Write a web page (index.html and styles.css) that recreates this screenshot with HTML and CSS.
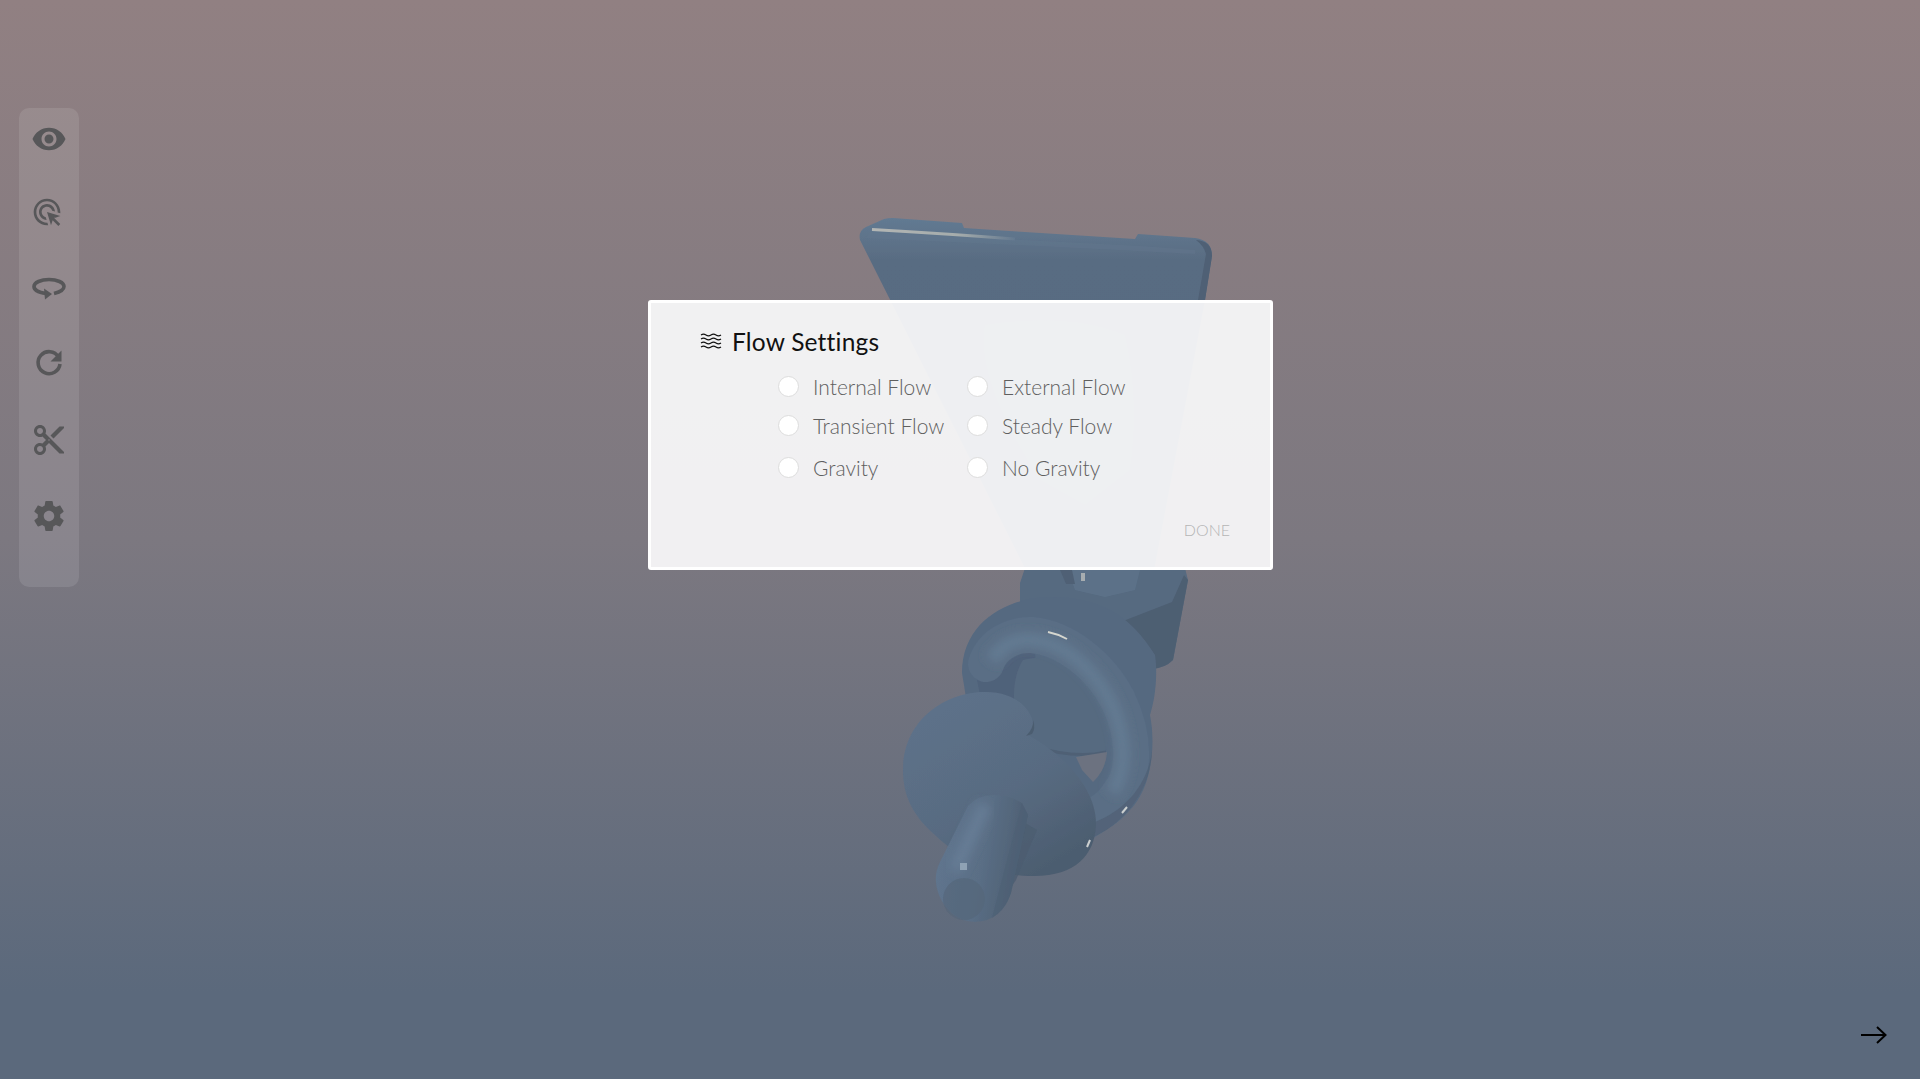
FILE: index.html
```html
<!DOCTYPE html>
<html lang="en">
  <head>
    <meta charset="UTF-8" />
    <title>Flow Settings</title>
    <link rel="stylesheet" href="styles.css">
  </head>
  <body>
    <!-- 3D model on the canvas -->
    <svg class="model" viewBox="0 0 1920 1079">
      <defs>
        <linearGradient id="plateFill" x1="0" y1="0" x2="0" y2="1">
          <stop offset="0" stop-color="#627a92" />
          <stop offset="0.12" stop-color="#596c82" />
          <stop offset="1" stop-color="#566a80" />
        </linearGradient>
        <linearGradient id="glint" x1="0" y1="0" x2="1" y2="0">
          <stop offset="0" stop-color="#b3b6b4" />
          <stop offset="0.6" stop-color="#a5acac" />
          <stop offset="1" stop-color="#64798f" />
        </linearGradient>
        <linearGradient id="discFill" x1="0.2" y1="0.1" x2="0.75" y2="0.95">
          <stop offset="0" stop-color="#5d7189" />
          <stop offset="0.55" stop-color="#586b81" />
          <stop offset="1" stop-color="#4c5d70" />
        </linearGradient>
        <linearGradient id="stemFill" x1="0" y1="0" x2="1" y2="0.25">
          <stop offset="0" stop-color="#607690" />
          <stop offset="0.6" stop-color="#5a6e85" />
          <stop offset="1" stop-color="#4d5f72" />
        </linearGradient>
        <filter id="soft"><feGaussianBlur stdDeviation="0.7" /></filter>
        <filter id="softer" x="-30%" y="-30%" width="160%" height="160%"><feGaussianBlur stdDeviation="5" /></filter>
      </defs>
      <g filter="url(#soft)">
        <!-- top plate -->
        <path fill="url(#plateFill)" d="M860 240 Q858 231 866 227 L884 219 Q888 218 893 218 L962 223 L964 228 L1135 239 L1138 234 L1195 238 Q1212 240 1212 256 L1205 300 L1154 570 L1026 570 Z" />
        <path fill="#4f6074" d="M1196 240 Q1212 241 1212 256 L1205 300 L1198 300 L1206 254 Q1204 246 1196 240 Z" />
        <path fill="#63788f" d="M870 232 L1140 246 L1195 250 L1195 254 L1040 246 L866 238 Z" opacity="0.4" />
        <path fill="#64798f" d="M985 325 Q1070 312 1125 335 Q1140 400 1130 470 L1085 505 L1040 480 Q975 380 985 325 Z" opacity="0.3" filter="url(#soft)" />
        <path fill="none" stroke="url(#glint)" stroke-width="3" d="M872 229.500 Q950 234 1015 239" />
        <!-- clamp body -->
        <path fill="#566a80" d="M1020 583 L1025 568 L1185 568 L1188 580 L1173 660 Q1165 668 1152 669 L1120 680 L1020 620 Z" />
        <path fill="#4e5f72" d="M1118 623 L1172 602 L1184 575 L1188 580 L1173 660 Q1165 668 1152 669 L1125 660 Z" />
        <path fill="#61768e" d="M1068 570 L1140 570 L1135 590 L1105 597 L1075 590 Z" opacity="0.6" />
        <path fill="#4f6175" d="M1060 570 L1072 570 L1075 584 L1066 584 Z" />
        <rect x="1081" y="573" width="4" height="8" fill="#a7adb0" />
        <!-- back of the ring -->
        <path fill="#556980" d="M962 673 C962 620 1010 597 1050 597 C1100 597 1130 615 1155 655 C1158 675 1155 700 1150 715 C1156 745 1152 790 1128 812 C1105 835 1085 840 1060 842 L1000 790 L968 710 Z" />
        <!-- inner disc and see-through gap -->
        <path fill="#50627a" d="M975 670 C990 650 1015 645 1035 650 L1040 745 L985 720 Z" />
        <path fill="#566a80" d="M1023 660 C1060 650 1095 670 1112 705 C1110 730 1108 745 1105 752 C1085 757 1060 755 1030 745 C1010 720 1010 680 1023 660 Z" />
        <path fill="none" stroke="#4f6175" stroke-width="3" d="M1030 745 C1060 755 1085 757 1106 752" />
        <path fill="#6c7280" d="M1076 757 L1107 752 Q1106 770 1093 782 L1082 770 Z" />
        <!-- front tube of the ring -->
        <path fill="none" stroke="#5a6e85" stroke-width="36" stroke-linecap="round" d="M986 664 C992 645 1012 634 1032 635 C1065 638 1100 665 1118 700 C1135 735 1136 775 1118 795 C1110 808 1100 812 1085 822" />
        <path fill="none" stroke="#647a92" stroke-width="14" filter="url(#softer)" d="M992 660 C1002 645 1015 638 1032 640 C1065 643 1095 670 1112 705 C1125 735 1128 770 1112 792" />
        <path fill="#4f6074" d="M1086 840 C1115 830 1150 800 1152 750 C1148 785 1125 810 1095 822 Z" opacity="0.7" />
        <!-- big disc -->
        <path fill="url(#discFill)" d="M903 770 C903 720 945 692 985 692 C1015 692 1030 708 1033 722 C1034 728 1031 732 1028 735 C1065 755 1097 790 1096 825 C1095 855 1075 876 1035 876 C1000 877 960 860 935 835 C912 815 903 795 903 770 Z" />
        <path fill="#4c5d70" d="M1026 736 Q1034 728 1033 720 Q1036 728 1032 734 Z" />
        <!-- stem -->
        <path fill="#4c5d70" d="M1020 820 L1037 830 L1016 880 L1003 900 Z" opacity="0.8" />
        <path fill="url(#stemFill)" d="M968 806 Q978 795 993 795 Q1010 795 1022 803 L1028 815 L1011 893 Q1002 921 975 922 Q950 921 939 895 Q932 878 940 862 Z" />
        <path fill="none" stroke="#667c94" stroke-width="14" filter="url(#softer)" d="M985 805 L955 870" />
        <path fill="#4f6074" d="M1022 803 L1028 815 L1011 893 Q1005 910 992 918 Q1002 880 1022 803 Z" opacity="0.6" />
        <circle cx="964" cy="899" r="21" fill="#546679" opacity="0.6" filter="url(#soft)" />
        <!-- glints -->
        <rect x="960" y="863" width="7" height="7" fill="#8fa2b4" />
        <path fill="none" stroke="#d5d6cf" stroke-width="2" d="M1048 632 Q1058 634 1067 639" />
        <path fill="none" stroke="#ccd0d0" stroke-width="2" d="M1122 813 L1127 807" />
        <path fill="none" stroke="#ccd0d0" stroke-width="2" d="M1087 847 L1090 840" />
      </g>
    </svg>

    <div class="stage">
      <nav class="toolbar">
        <div class="tool tool-eye">
          <svg viewBox="0 0 24 24"><path d="M12 4.500C7 4.500 2.730 7.610 1 12c1.730 4.390 6 7.500 11 7.500s9.270-3.110 11-7.500c-1.730-4.390-6-7.500-11-7.500zM12 17c-2.760 0-5-2.240-5-5s2.240-5 5-5 5 2.240 5 5-2.240 5-5 5zm0-8c-1.660 0-3 1.340-3 3s1.340 3 3 3 3-1.340 3-3-1.340-3-3-3z" /></svg>
        </div>
        <div class="tool tool-select">
          <svg viewBox="0 0 24 24"><path d="M11.710 17.990C8.530 17.840 6 15.220 6 12c0-3.310 2.690-6 6-6 3.220 0 5.840 2.530 5.990 5.710l-2.100-.63C15.480 9.310 13.890 8 12 8c-2.210 0-4 1.790-4 4 0 1.890 1.310 3.480 3.080 3.890l.63 2.100zM22 12c0 .3-.01.6-.04.9l-1.970-.59C20 12.210 20 12.100 20 12c0-4.420-3.580-8-8-8s-8 3.580-8 8 3.580 8 8 8c.1 0 .21 0 .31-.01l.59 1.970c-.3.03-.6.04-.9.04C6.480 22 2 17.520 2 12S6.480 2 12 2s10 4.480 10 10zm-3.770 4.260L22 15l-10-3 3 10 1.260-3.770 4.270 4.270 1.410-1.410-4.710-4.830z" /></svg>
        </div>
        <div class="tool">
          <svg viewBox="0 0 36 36">
            <path class="line" d="M15 23.500 C7 22.500 3 19.500 3 16.500 C3 12.500 10 9.500 18 9.500 C26 9.500 33 12.500 33 16.500 C33 19.500 29 22 23 23.500" />
            <path d="M13 18.500 L21 24 L14 29.500 Z" />
          </svg>
        </div>
        <div class="tool">
          <svg viewBox="0 0 36 36">
            <path class="line" d="M27.500 12 A11 11 0 1 0 29 19" />
            <path d="M30.500 5.500 L30.500 16.500 L19.500 16.500 Z" />
          </svg>
        </div>
        <div class="tool tool-low">
          <svg viewBox="0 0 24 24"><path d="M9.640 7.640c.23-.5.36-1.050.36-1.640 0-2.210-1.790-4-4-4S2 3.790 2 6s1.790 4 4 4c.59 0 1.140-.13 1.640-.36L10 12l-2.360 2.360C7.140 14.130 6.590 14 6 14c-2.210 0-4 1.790-4 4s1.790 4 4 4 4-1.790 4-4c0-.59-.13-1.140-.36-1.640L12 14l7 7h3v-1L9.640 7.640zM6 8c-1.100 0-2-.89-2-2s.9-2 2-2 2 .89 2 2-.9 2-2 2zm0 12c-1.100 0-2-.89-2-2s.9-2 2-2 2 .89 2 2-.9 2-2 2zm6-7.500c-.28 0-.5-.22-.5-.5s.22-.5.5-.5.5.22.5.5-.22.5-.5.5zM19 3l-6 6 2 2 7-7V3z" /></svg>
        </div>
        <div class="tool tool-gear">
          <svg viewBox="0 0 24 24"><path d="M19.430 12.980c.04-.32.07-.64.07-.98s-.03-.66-.07-.98l2.110-1.650c.19-.15.24-.42.12-.64l-2-3.460c-.12-.22-.39-.3-.61-.22l-2.490 1c-.52-.4-1.080-.73-1.690-.98l-.38-2.650C14.460 2.180 14.250 2 14 2h-4c-.25 0-.46.18-.49.42l-.38 2.650c-.61.25-1.170.59-1.690.98l-2.490-1c-.23-.09-.49 0-.61.22l-2 3.460c-.13.22-.07.49.12.64l2.110 1.650c-.04.32-.07.65-.07.98s.03.66.07.98l-2.110 1.650c-.19.15-.24.42-.12.64l2 3.460c.12.22.39.3.61.22l2.490-1c.52.4 1.080.73 1.690.98l.38 2.650c.03.24.24.42.49.42h4c.25 0 .46-.18.49-.42l.38-2.650c.61-.25 1.170-.59 1.690-.98l2.490 1c.23.09.49 0 .61-.22l2-3.460c.12-.22.07-.49-.12-.64l-2.110-1.650zM12 15.500c-1.930 0-3.500-1.570-3.500-3.500s1.570-3.500 3.500-3.500 3.500 1.570 3.500 3.500-1.570 3.500-3.500 3.500z" /></svg>
        </div>
      </nav>

      <svg class="next-arrow" viewBox="0 0 26 18">
        <path d="M0 9 H24 M16 1 L24.500 9 L16 17" />
      </svg>
    </div>

    <section class="dialog">
      <h2 class="dialog-title">
        <svg class="waves" viewBox="0 0 22 16">
          <path d="M1 2 q2.500 -1.600 5 0 t5 0 t5 0 t5 0" />
          <path d="M1 6 q2.500 -1.600 5 0 t5 0 t5 0 t5 0" />
          <path d="M1 10 q2.500 -1.600 5 0 t5 0 t5 0 t5 0" />
          <path d="M1 14 q2.500 -1.600 5 0 t5 0 t5 0 t5 0" />
        </svg>
        Flow Settings
      </h2>

      <div class="options">
        <label class="option"><span class="radio"></span>Internal Flow</label>
        <label class="option"><span class="radio"></span>External Flow</label>
        <label class="option"><span class="radio"></span>Transient Flow</label>
        <label class="option"><span class="radio"></span>Steady Flow</label>
        <label class="option"><span class="radio"></span>Gravity</label>
        <label class="option"><span class="radio"></span>No Gravity</label>
      </div>

      <div class="actions">
        <button class="done">DONE</button>
      </div>
    </section>
  </body>
</html>
```

FILE: styles.css
```css
html,
body {
  margin: 0;
  height: 1079px;
  overflow: hidden;
}
body {
  position: relative;
  font-family: Lato, "Open Sans", sans-serif;
  background: linear-gradient(180deg, #918082 0%, #7c7880 50%, #5b697c 92%, #5b697c 100%);
}
.model {
  position: absolute;
  top: 0;
  left: 0;
  width: 1920px;
  height: 1079px;
}
.stage {
  position: relative;
  box-sizing: border-box;
  height: 100%;
  display: flex;
  justify-content: space-between;
  padding: 108px 33px 35px 19px;
}
.toolbar {
  box-sizing: border-box;
  width: 60px;
  height: 479px;
  padding-top: 12px;
  display: flex;
  flex-direction: column;
  align-items: center;
  gap: 39px;
  background: rgba(255, 255, 255, 0.1);
  border-radius: 10px;
}
.tool {
  width: 36px;
  height: 36px;
}
.tool svg {
  display: block;
  width: 36px;
  height: 36px;
  fill: #575759;
}
.tool .line {
  fill: none;
  stroke: #575759;
  stroke-width: 3.6;
}
.tool-eye svg {
  margin-top: 1px;
}
.tool-select svg {
  width: 32px;
  height: 32px;
  margin: 1px 0 0 0;
}
.tool-low {
  padding-top: 2px;
}
.tool-gear {
  padding-top: 1px;
}
.next-arrow {
  align-self: flex-end;
  width: 26px;
  height: 18px;
  fill: none;
  stroke: #000;
  stroke-width: 2;
}
.dialog {
  position: absolute;
  top: 300px;
  left: 648px;
  box-sizing: border-box;
  width: 625px;
  height: 270px;
  border: 3px solid #fff;
  border-radius: 3px;
  background: rgba(251, 251, 252, 0.92);
  padding: 23px 40px 0 49px;
}
.dialog-title {
  display: flex;
  align-items: center;
  gap: 10px;
  margin: 0;
  height: 30px;
  font-size: 24.500px;
  font-weight: 400;
  letter-spacing: 0.2px;
  color: #111;
}
.waves {
  width: 22px;
  height: 16px;
  fill: none;
  stroke: #111;
  stroke-width: 1.2;
}
.options {
  display: grid;
  grid-template-columns: 189px 190px;
  grid-template-rows: 39px 42px 30px;
  margin: 20px 0 0 78px;
}
.option {
  display: flex;
  align-items: flex-start;
  gap: 14px;
  font-size: 21px;
  font-weight: 300;
  line-height: 22px;
  color: #5f5f5f;
}
.radio {
  box-sizing: border-box;
  flex: none;
  width: 21px;
  height: 21px;
  border: 1px solid #ddd;
  border-radius: 50%;
  background: #fff;
}
.actions {
  display: flex;
  justify-content: flex-end;
  margin-top: 33px;
}
.done {
  padding: 0;
  border: none;
  background: none;
  font-family: inherit;
  font-size: 16px;
  font-weight: 300;
  color: #b5b5b5;
}
```
